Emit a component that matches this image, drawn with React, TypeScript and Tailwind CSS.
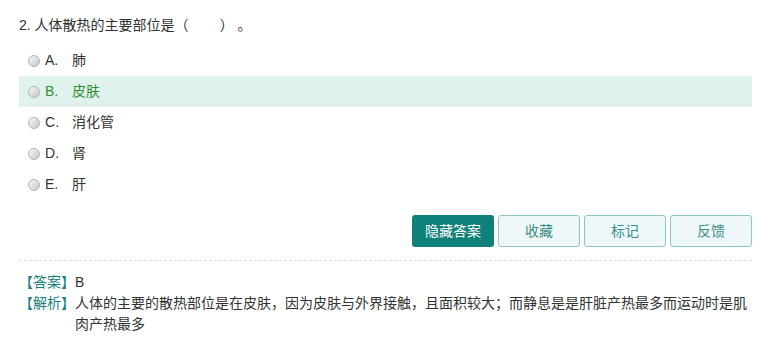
import React from "react";

type Option = {
  key: string;
  text: string;
};

const options: Option[] = [
  { key: "A", text: "肺" },
  { key: "B", text: "皮肤" },
  { key: "C", text: "消化管" },
  { key: "D", text: "肾" },
  { key: "E", text: "肝" },
];

const correct = "B";

function Radio() {
  return (
    <span className="inline-block h-[12px] w-[12px] shrink-0 rounded-full border border-[#b4b4b4] bg-linear-to-br from-[#f8f8f8] to-[#c6c6c6]" />
  );
}

export default function App() {
  return (
    <div
      className="h-[357px] w-[771px] bg-white px-[19px] pt-[15px] text-[14px] text-[#333]"
      style={{ fontFamily: '"Liberation Sans", "Noto Sans CJK SC", sans-serif' }}
    >
      {/* Question */}
      <p className="whitespace-pre leading-[20px]">2. 人体散热的主要部位是（        ） 。</p>

      {/* Options */}
      <ul className="mt-[10px]">
        {options.map((o) => {
          const active = o.key === correct;
          return (
            <li
              key={o.key}
              className={
                active
                  ? "flex h-[31px] items-center bg-[#dff3ec] pl-[9px] text-[#2f8f2f]"
                  : "flex h-[31px] items-center pl-[9px]"
              }
            >
              <Radio />
              <span className="ml-[5px] w-[27px]">{o.key}.</span>
              <span>{o.text}</span>
            </li>
          );
        })}
      </ul>

      {/* Actions */}
      <div className="mt-[15px] flex justify-end gap-[4px]">
        <button className="h-[32px] w-[82px] rounded-[3px] bg-[#10807a] text-white">
          隐藏答案
        </button>
        <button className="h-[32px] w-[82px] rounded-[3px] border border-[#8cc7c2] bg-[#eef8f8] text-[#3a8d88]">
          收藏
        </button>
        <button className="h-[32px] w-[82px] rounded-[3px] border border-[#8cc7c2] bg-[#eef8f8] text-[#3a8d88]">
          标记
        </button>
        <button className="h-[32px] w-[82px] rounded-[3px] border border-[#8cc7c2] bg-[#eef8f8] text-[#3a8d88]">
          反馈
        </button>
      </div>

      {/* Answer + analysis */}
      <div className="mt-[13px] border-t border-dashed border-[#dedede] pt-[11px] leading-[21px]">
        <div className="flex">
          <span className="w-[56px] shrink-0 text-[#15807a]">【答案】</span>
          <span>B</span>
        </div>
        <div className="flex">
          <span className="w-[56px] shrink-0 text-[#15807a]">【解析】</span>
          <span>
            人体的主要的散热部位是在皮肤，因为皮肤与外界接触，且面积较大；而静息是是肝脏产热最多而运动时是肌肉产热最多
          </span>
        </div>
      </div>
    </div>
  );
}
